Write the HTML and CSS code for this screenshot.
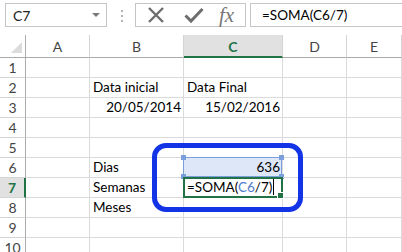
FILE: index.html
```html
<!DOCTYPE html>
<html lang="pt">
<head>
    <meta charset="UTF-8">
    <meta name="viewport" content="width=device-width, initial-scale=1.0">
    <title>SOMA - planilha</title>
    <link rel="stylesheet" href="styles.css">
</head>
<body>
    <div class="app">
        <!-- barra de fórmulas -->
        <div class="toolbar">
            <div class="namebox">
                <span>C7</span>
                <span class="caret"></span>
            </div>
            <div class="grip">
                <i></i><i></i><i></i>
            </div>
            <div class="fxbox">
                <svg class="tool-icon" width="18" height="18" viewBox="0 0 18 18">
                    <path d="M2 2 L16 16 M16 2 L2 16" stroke="#6e6e6e" stroke-width="2.4" fill="none"/>
                </svg>
                <svg class="tool-icon" width="20" height="18" viewBox="0 0 20 18">
                    <path d="M1.5 9.5 L7 15 L18.5 3" stroke="#6e6e6e" stroke-width="3" fill="none"/>
                </svg>
                <span class="fx">fx</span>
            </div>
            <div class="formula">=SOMA(C6/7)</div>
        </div>

        <!-- planilha -->
        <div class="sheet">
            <div class="corner"><span class="tri"></span></div>
            <div class="colhead">A</div>
            <div class="colhead">B</div>
            <div class="colhead active">C</div>
            <div class="colhead">D</div>
            <div class="colhead">E</div>

            <div class="rowhead">1</div>
            <div class="cell"></div><div class="cell"></div><div class="cell"></div><div class="cell"></div><div class="cell"></div>

            <div class="rowhead">2</div>
            <div class="cell"></div><div class="cell">Data inicial</div><div class="cell">Data Final</div><div class="cell"></div><div class="cell"></div>

            <div class="rowhead">3</div>
            <div class="cell"></div><div class="cell num">20/05/2014</div><div class="cell num">15/02/2016</div><div class="cell"></div><div class="cell"></div>

            <div class="rowhead">4</div>
            <div class="cell"></div><div class="cell"></div><div class="cell"></div><div class="cell"></div><div class="cell"></div>

            <div class="rowhead">5</div>
            <div class="cell"></div><div class="cell"></div><div class="cell"></div><div class="cell"></div><div class="cell"></div>

            <div class="rowhead">6</div>
            <div class="cell"></div><div class="cell">Dias</div>
            <div class="cell num ref">
                636
                <span class="ref-box">
                    <b class="h tl"></b><b class="h tr"></b><b class="h bl"></b><b class="h br"></b>
                </span>
            </div>
            <div class="cell"></div><div class="cell"></div>

            <div class="rowhead active">7</div>
            <div class="cell"></div><div class="cell">Semanas</div>
            <div class="cell editing">
                =SOMA(<span class="ref-text">C6</span>/7)<span class="cursor"></span>
                <span class="active-box"><b class="fill"></b></span>
            </div>
            <div class="cell"></div><div class="cell"></div>

            <div class="rowhead">8</div>
            <div class="cell"></div><div class="cell">Meses</div><div class="cell"></div><div class="cell"></div><div class="cell"></div>

            <div class="rowhead">9</div>
            <div class="cell"></div><div class="cell"></div><div class="cell"></div><div class="cell"></div><div class="cell"></div>

            <div class="rowhead">10</div>
            <div class="cell"></div><div class="cell"></div><div class="cell"></div><div class="cell"></div><div class="cell"></div>
        </div>

        <!-- destaque -->
        <div class="callout"></div>
    </div>
</body>
</html>
```

FILE: styles.css
```css
body {
    margin: 0;
    padding: 0;
    background-color: #ffffff;
    font-family: Lato, "Open Sans", sans-serif;
    color: #000000;
}

.app {
    position: relative;
    width: 402px;
    height: 252px;
    overflow: hidden;
}

/* barra de fórmulas */
.toolbar {
    display: flex;
    align-items: flex-start;
    height: 35px;
    padding: 3px 0 0 5px;
    box-sizing: border-box;
}

.namebox {
    display: flex;
    align-items: center;
    justify-content: space-between;
    width: 102px;
    height: 24px;
    box-sizing: border-box;
    border: 1px solid #c6c6c6;
    padding: 0 6px 0 7px;
    font-size: 14px;
    color: #222222;
}

.caret {
    width: 0;
    height: 0;
    border-left: 4px solid transparent;
    border-right: 4px solid transparent;
    border-top: 4px solid #7a7a7a;
}

.grip {
    display: flex;
    flex-direction: column;
    gap: 3px;
    margin: 7px 0 0 14px;
    width: 14px;
}

.grip i {
    display: block;
    width: 2px;
    height: 2px;
    background-color: #b4b4b4;
}

.fxbox {
    display: flex;
    align-items: center;
    width: 111px;
    height: 24px;
    box-sizing: border-box;
    border: 1px solid #c6c6c6;
    padding-left: 11px;
}

.tool-icon {
    margin-right: 19px;
}

.fx {
    font-family: "Liberation Serif", serif;
    font-style: italic;
    font-size: 21px;
    color: #777777;
    margin-left: -4px;
    line-height: 1;
}

.formula {
    flex: 1;
    height: 24px;
    box-sizing: border-box;
    margin-left: 4px;
    border: 1px solid #c6c6c6;
    border-right: none;
    padding-left: 11px;
    font-size: 13.5px;
    line-height: 22px;
}

/* planilha */
.sheet {
    display: grid;
    grid-template-columns: 26px 64px 94px 99px 64px 1fr;
    grid-template-rows: 23px repeat(10, 20px);
}

.corner,
.colhead,
.rowhead {
    box-sizing: border-box;
    background-color: #ffffff;
    color: #444444;
    font-size: 14px;
}

.corner {
    position: relative;
    border-right: 1px solid #ababab;
    border-bottom: 1px solid #ababab;
}

.tri {
    position: absolute;
    right: 3px;
    bottom: 4px;
    width: 0;
    height: 0;
    border-left: 11px solid transparent;
    border-bottom: 11px solid #dcdcdc;
}

.colhead {
    display: flex;
    align-items: center;
    justify-content: center;
    border-right: 1px solid #d4d4d4;
    border-bottom: 1px solid #ababab;
    padding-top: 1px;
}

.colhead.active {
    background-color: #e1e1e1;
    border-bottom: 2px solid #217346;
    color: #217346;
    font-weight: bold;
}

.rowhead {
    display: flex;
    align-items: flex-end;
    justify-content: center;
    border-right: 1px solid #ababab;
    border-bottom: 1px solid #d4d4d4;
    padding-bottom: 1px;
}

.rowhead.active {
    background-color: #e1e1e1;
    border-right: 2px solid #217346;
    color: #217346;
    font-weight: bold;
}

.cell {
    position: relative;
    box-sizing: border-box;
    border-right: 1px solid #dadada;
    border-bottom: 1px solid #dadada;
    padding: 0 2px 0 3px;
    font-size: 13.5px;
    line-height: 19px;
    white-space: nowrap;
    overflow: visible;
}

.cell.num {
    text-align: right;
}

/* referência C6 */
.cell.ref {
    background-color: #dde7f7;
}

.ref-box {
    position: absolute;
    top: -1px;
    left: -1px;
    right: 0;
    bottom: 0;
    border: 1px solid #7b9fdc;
}

.h {
    position: absolute;
    width: 5px;
    height: 5px;
    background-color: #7b9fdc;
}

.h.tl { left: -3px; top: -3px; }
.h.tr { right: -3px; top: -3px; }
.h.bl { left: -3px; bottom: -3px; }
.h.br { right: -3px; bottom: -3px; }

/* célula em edição */
.cell.editing {
    z-index: 1;
}

.ref-text {
    color: #4f7ccc;
}

.cursor {
    display: inline-block;
    width: 1px;
    height: 16px;
    margin-left: 1px;
    background-color: #000000;
    vertical-align: -3px;
}

.active-box {
    position: absolute;
    top: -1px;
    left: -1px;
    right: -1px;
    bottom: -1px;
    border: 2px solid #217346;
}

.fill {
    position: absolute;
    right: -3px;
    bottom: -3px;
    width: 5px;
    height: 5px;
    background-color: #217346;
    border: 1px solid #ffffff;
}

/* destaque */
.callout {
    position: absolute;
    left: 152px;
    top: 143px;
    width: 151px;
    height: 69px;
    box-sizing: border-box;
    border: 5px solid #1234e6;
    border-radius: 14px;
}
```
